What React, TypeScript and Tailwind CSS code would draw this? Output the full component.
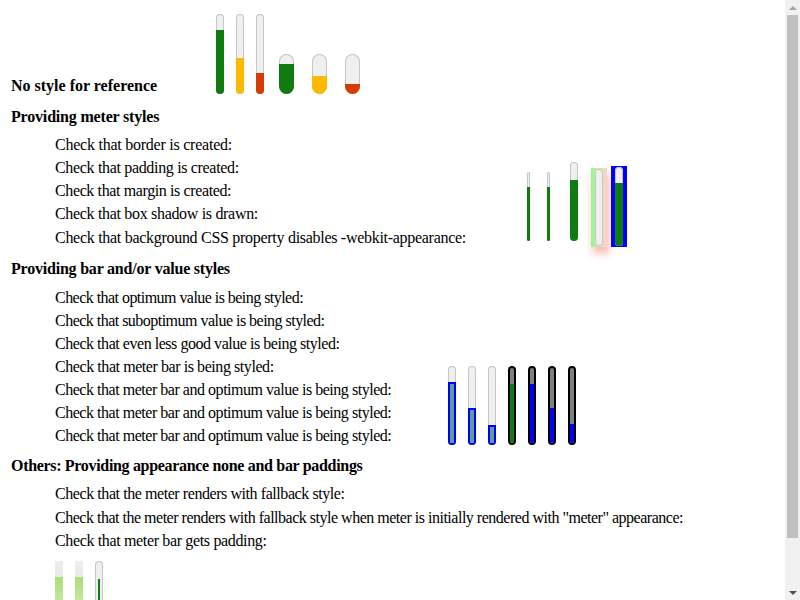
import type { ReactNode } from 'react';

type MeterProps = {
  w: string;
  h: string;
  value: number;
  fill: string;
  track?: string;
};

// plain meter: rounded track, fill grows from the bottom
function Meter({ w, h, value, fill, track = 'bg-[#efefef] shadow-[inset_0_0_0_1px_#c6c6c6]' }: MeterProps) {
  return (
    <div className={`relative shrink-0 overflow-hidden rounded-full ${w} ${h} ${track}`}>
      <div className={`absolute inset-x-0 bottom-0 ${fill}`} style={{ height: `${value * 100}%` }} />
    </div>
  );
}

function Label({ children, className = '' }: { children: ReactNode; className?: string }) {
  return <div className={`flex items-center whitespace-nowrap ${className}`}>{children}</div>;
}

function Heading({ children, className = '' }: { children: ReactNode; className?: string }) {
  return <div className={`h-[23px] leading-[23px] font-bold whitespace-nowrap ${className}`}>{children}</div>;
}

export default function App() {
  return (
    <div className="flex h-screen w-full overflow-hidden bg-white text-[16px] text-black" style={{ fontFamily: '"Liberation Serif", "Times New Roman", serif' }}>
      <div className="flex-1 overflow-hidden pl-[11px] pt-[14px]">
        {/* no style for reference */}
        <div className="flex items-end">
          <Heading className="w-[205px]">No style for reference</Heading>
          <div className="mb-[3px] flex items-end">
            <div className="flex gap-[12px]">
              <Meter w="w-[8px]" h="h-[80px]" value={0.8} fill="bg-[#107c10]" />
              <Meter w="w-[8px]" h="h-[80px]" value={0.45} fill="bg-[#ffb900]" />
              <Meter w="w-[8px]" h="h-[80px]" value={0.26} fill="bg-[#d83b01]" />
            </div>
            <div className="ml-[15px] flex gap-[18px]">
              <Meter w="w-[15px]" h="h-[40px]" value={0.75} fill="bg-[#107c10]" />
              <Meter w="w-[15px]" h="h-[40px]" value={0.45} fill="bg-[#ffb900]" />
              <Meter w="w-[15px]" h="h-[40px]" value={0.25} fill="bg-[#d83b01]" />
            </div>
          </div>
        </div>

        {/* providing meter styles */}
        <Heading className="mt-[8px] tracking-[-0.18px]">Providing meter styles</Heading>
        <div className="mt-[5px] flex items-end pl-[44px]">
          <div className="w-[472px]">
            <Label className="h-[23.25px] tracking-[-0.24px]">Check that border is created:</Label>
            <Label className="h-[23.25px] tracking-[-0.33px]">Check that padding is created:</Label>
            <Label className="h-[23.25px] tracking-[-0.38px]">Check that margin is created:</Label>
            <Label className="h-[23.25px] tracking-[-0.32px]">Check that box shadow is drawn:</Label>
            <Label className="h-[23.25px] tracking-[-0.29px]">Check that background CSS property disables -webkit-appearance:</Label>
          </div>
          <div className="mb-[2px] flex items-end">
            <div className="mb-[6px]">
              <Meter w="w-[3px]" h="h-[69px]" value={0.78} fill="bg-[#107c10]" />
            </div>
            <div className="mb-[6px] ml-[17px]">
              <Meter w="w-[3px]" h="h-[69px]" value={0.78} fill="bg-[#107c10]" />
            </div>
            <div className="mb-[6px] ml-[20px]">
              <Meter w="w-[8px]" h="h-[79px]" value={0.78} fill="bg-[#107c10]" />
            </div>
            <div className="ml-[13px] flex h-[79px] w-[16px] justify-center bg-gradient-to-r from-[#8cf98c] to-[#ffd0d0] py-[1px] shadow-[2px_6px_8px_rgba(255,80,80,0.45)]">
              <Meter w="w-[8px]" h="h-full" value={0} fill="bg-[#107c10]" />
            </div>
            <div className="ml-[4px] flex h-[81px] w-[16px] justify-center bg-[#0000ff] py-[1px]">
              <Meter w="w-[8px]" h="h-full" value={0.8} fill="bg-[#107c10]" />
            </div>
          </div>
        </div>

        {/* providing bar and/or value styles */}
        <Heading className="mt-[8px] tracking-[-0.21px]">Providing bar and/or value styles</Heading>
        <div className="mt-[6px] flex items-end pl-[44px]">
          <div className="w-[393px]">
            <Label className="h-[23px] tracking-[-0.54px]">Check that optimum value is being styled:</Label>
            <Label className="h-[23px] tracking-[-0.52px]">Check that suboptimum value is being styled:</Label>
            <Label className="h-[23px] tracking-[-0.46px]">Check that even less good value is being styled:</Label>
            <Label className="h-[23px] tracking-[-0.43px]">Check that meter bar is being styled:</Label>
            <Label className="h-[23px] tracking-[-0.47px]">Check that meter bar and optimum value is being styled:</Label>
            <Label className="h-[23px] tracking-[-0.47px]">Check that meter bar and optimum value is being styled:</Label>
            <Label className="h-[23px] tracking-[-0.47px]">Check that meter bar and optimum value is being styled:</Label>
          </div>
          <div className="mb-[2.5px] flex items-end gap-[12px]">
            <Meter w="w-[8px]" h="h-[79px]" value={0.8} fill="border-2 border-[#0000ff] bg-[#5f9f8f]" />
            <Meter w="w-[8px]" h="h-[79px]" value={0.46} fill="border-2 border-[#0000ff] bg-[#5f9f8f]" />
            <Meter w="w-[8px]" h="h-[79px]" value={0.25} fill="border-2 border-[#0000ff] bg-[#5f9f8f]" />
            <Meter w="w-[8px]" h="h-[79px]" value={0.79} fill="bg-[#107c10]" track="bg-[#808080] border-2 border-black" />
            <Meter w="w-[8px]" h="h-[79px]" value={0.79} fill="bg-[#0000ff]" track="bg-[#808080] border-2 border-black" />
            <Meter w="w-[8px]" h="h-[79px]" value={0.46} fill="bg-[#0000ff]" track="bg-[#808080] border-2 border-black" />
            <Meter w="w-[8px]" h="h-[79px]" value={0.25} fill="bg-[#0000ff]" track="bg-[#808080] border-2 border-black" />
          </div>
        </div>

        {/* others */}
        <Heading className="mt-[7px] tracking-[-0.32px]">Others: Providing appearance none and bar paddings</Heading>
        <div className="mt-[5px] pl-[44px]">
          <Label className="h-[23.5px] tracking-[-0.43px]">Check that the meter renders with fallback style:</Label>
          <Label className="h-[23.5px] tracking-[-0.49px]">Check that the meter renders with fallback style when meter is initially rendered with "meter" appearance:</Label>
          <Label className="h-[23.5px] tracking-[-0.35px]">Check that meter bar gets padding:</Label>
          <div className="mt-[8px] flex items-start gap-[12px]">
            <div className="relative h-[80px] w-[8px] bg-gradient-to-b from-[#eeeeee] to-[#d8d8d8]">
              <div className="absolute inset-x-0 bottom-0 h-[64px] bg-gradient-to-b from-[#aade77] via-[#cceeaa] to-[#77aa33]" />
            </div>
            <div className="relative h-[80px] w-[8px] bg-gradient-to-b from-[#eeeeee] to-[#d8d8d8]">
              <div className="absolute inset-x-0 bottom-0 h-[64px] bg-gradient-to-b from-[#aade77] via-[#cceeaa] to-[#77aa33]" />
            </div>
            <div className="flex h-[80px] w-[8px] justify-center rounded-full bg-[#efefef] pt-[18px] shadow-[inset_0_0_0_1px_#c6c6c6]">
              <div className="h-full w-[2px] bg-[#107c10]" />
            </div>
          </div>
        </div>
      </div>

      {/* scrollbar */}
      <div className="flex h-full w-[15px] shrink-0 flex-col bg-[#f1f1f1]">
        <div className="flex h-[15px] items-center justify-center">
          <div className="h-0 w-0 border-x-[4px] border-b-[4px] border-x-transparent border-b-[#a3a3a3]" />
        </div>
        <div className="flex-1 px-[2px]">
          <div className="h-[523px] bg-[#c1c1c1]" />
        </div>
        <div className="flex h-[15px] items-center justify-center">
          <div className="h-0 w-0 border-x-[4px] border-t-[4px] border-x-transparent border-t-[#505050]" />
        </div>
      </div>
    </div>
  );
}
